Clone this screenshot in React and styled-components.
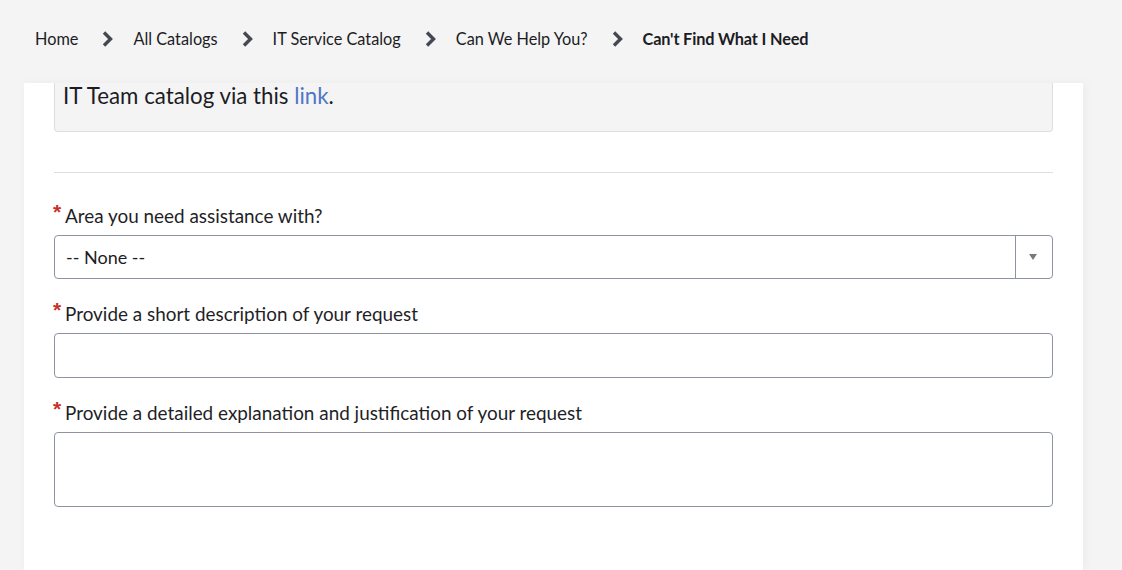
import styled, { createGlobalStyle } from "styled-components";

const GlobalStyle = createGlobalStyle`
  html, body {
    margin: 0;
    padding: 0;
    background: #f4f4f4;
    font-family: "Lato", "Liberation Sans", sans-serif;
    color: #1c1c24;
  }
  * { box-sizing: border-box; }
`;

const crumbs = ["Home", "All Catalogs", "IT Service Catalog", "Can We Help You?"];

const Page = styled.div`
  height: 570px;
  display: flex;
  flex-direction: column;
  padding: 0 39px 0 24px;
  overflow: hidden;
`;

const Breadcrumbs = styled.nav`
  height: 83px;
  display: flex;
  align-items: center;
  padding: 0 0 6px 11px;
  font-size: 16.3px;
`;

const CrumbItem = styled.span`
  display: inline-flex;
  align-items: center;
`;

const Crumb = styled.span`
  color: #1c1c24;
  font-weight: ${(p) => (p.$current ? 700 : 400)};
  letter-spacing: ${(p) => (p.$current ? "-0.15px" : "0")};
`;

const Sep = styled.span`
  display: inline-flex;
  width: 55px;
  padding-left: 24px;
  color: #454752;
`;

const Card = styled.main`
  flex: 1;
  background: #fff;
  padding: 0 30px 40px;
  overflow: hidden;
  box-shadow: 2px 0 10px rgba(0, 0, 0, 0.04);
`;

/* the notice is scrolled past: only its last line and bottom edge show */
const InfoBox = styled.div`
  background: #f4f4f5;
  border: 1px solid #dedee2;
  border-top: 0;
  border-radius: 0 0 4px 4px;
  padding: 0 8px 22px;
  font-size: 22.3px;
  line-height: 26px;
  color: #1c1c24;
`;

const Link = styled.a`
  color: #4f77c4;
  text-decoration: none;
`;

const Divider = styled.hr`
  border: 0;
  border-top: 1px solid #dedede;
  margin: 40px 0 0;
`;

const Field = styled.div`
  margin-top: ${(p) => p.$top}px;
`;

const Label = styled.label`
  display: flex;
  align-items: flex-start;
  font-size: 18.9px;
  line-height: 24px;
  color: #1f1f28;
  margin-bottom: 7px;
`;

const Star = styled.span`
  color: #c8312b;
  font-family: "Liberation Sans", sans-serif;
  font-weight: 700;
  font-size: 21px;
  line-height: 16px;
  width: 12px;
  margin-left: -1px;
`;

const SelectBox = styled.div`
  height: 44px;
  display: flex;
  border: 1px solid #8e93a2;
  border-radius: 4px;
  background: #fff;
`;

const SelectValue = styled.div`
  flex: 1;
  display: flex;
  align-items: center;
  padding-left: 11px;
  font-size: 18px;
  color: #1c1c24;
`;

const SelectArrow = styled.div`
  width: 37px;
  border-left: 1px solid #8e93a2;
  display: flex;
  align-items: center;
  justify-content: center;
  padding-right: 2px;
`;

const TextInput = styled.div`
  height: ${(p) => p.$h}px;
  border: 1px solid #8e93a2;
  border-radius: 4px;
  background: #fff;
`;

const Chevron = () => (
  <svg width="11" height="16" viewBox="0 0 11 16">
    <path d="M2 1.5 L8.5 8 L2 14.5" fill="none" stroke="currentColor" strokeWidth="3.4" />
  </svg>
);

export default function App() {
  return (
    <>
      <GlobalStyle />
      <Page>
        <Breadcrumbs>
          {crumbs.map((c) => (
            <CrumbItem key={c}>
              <Crumb>{c}</Crumb>
              <Sep>
                <Chevron />
              </Sep>
            </CrumbItem>
          ))}
          <Crumb $current>Can't Find What I Need</Crumb>
        </Breadcrumbs>

        <Card>
          <InfoBox>
            IT Team catalog via this <Link href="#">link</Link>.
          </InfoBox>
          <Divider />

          <Field $top={31}>
            <Label>
              <Star>*</Star>Area you need assistance with?
            </Label>
            <SelectBox>
              <SelectValue>-- None --</SelectValue>
              <SelectArrow>
                <svg width="8" height="6" viewBox="0 0 8 6">
                  <path d="M0 0 H8 L4 6 Z" fill="#7a7a7a" />
                </svg>
              </SelectArrow>
            </SelectBox>
          </Field>

          <Field $top={23}>
            <Label>
              <Star>*</Star>Provide a short description of your request
            </Label>
            <TextInput $h={45} />
          </Field>

          <Field $top={23}>
            <Label>
              <Star>*</Star>Provide a detailed explanation and justification of your request
            </Label>
            <TextInput $h={75} />
          </Field>
        </Card>
      </Page>
    </>
  );
}
